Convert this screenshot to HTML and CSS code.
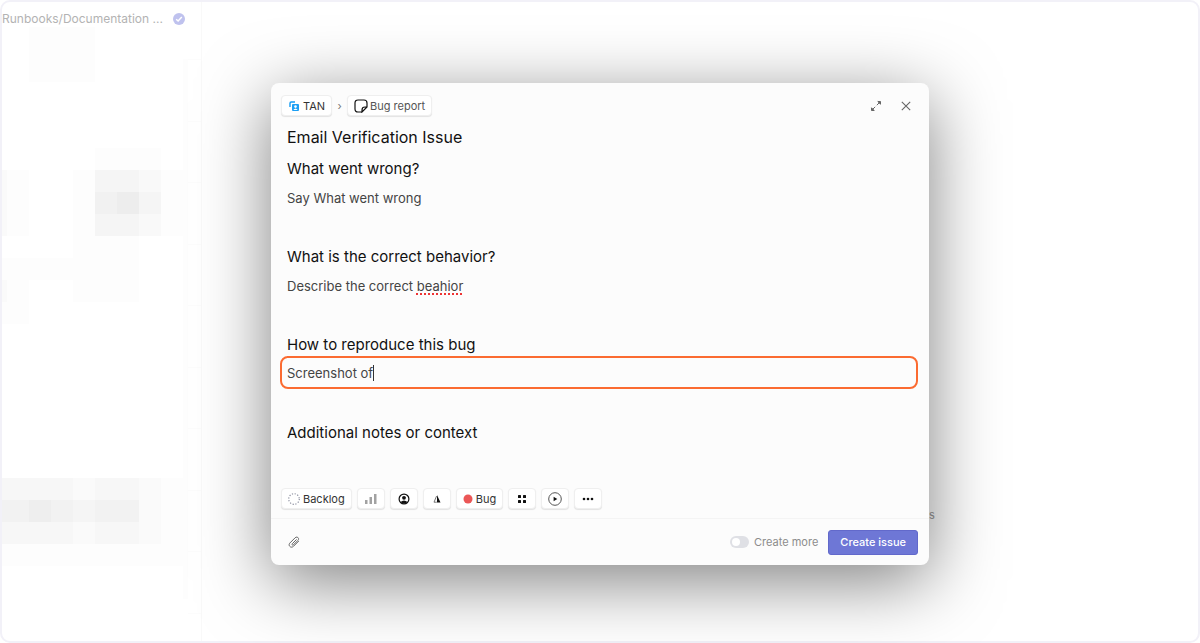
FILE: index.html
```html
<!DOCTYPE html>
<html lang="en">
<head>
<meta charset="utf-8">
<title>New issue</title>
<link rel="stylesheet" href="styles.css">
</head>
<body>
<div class="app">
  <aside class="sidebar">
    <div class="sidebar-item">
      <span>Runbooks/Documentation ...</span>
      <svg class="check" viewBox="0 0 12 12" aria-hidden="true"><circle cx="6" cy="6" r="6" fill="#bfc2ee"/><path d="M3.2 6.2 5.1 8l3.7-4" fill="none" stroke="#fff" stroke-width="1.5"/></svg>
    </div>
    <svg class="mosaic" viewBox="0 0 200 616" width="200" height="616" aria-hidden="true" shape-rendering="crispEdges">
      <g fill="#000">
        <path opacity=".006" d="M27 2h66v55H27zM49 2h22v55H49z"/>
        <path opacity=".006" d="M71 145h110v66H71zM0 145h27v66H0zM71 211h66v66H71zM0 233h93v22H0zM0 233h27v66H0z"/>
        <path opacity=".012" d="M0 145h5v66H0zM0 255h5v22H0z"/>
        <path opacity=".006" d="M93 123h66v22H93z"/>
        <path opacity=".014" d="M93 145h66v66H93z"/>
        <path opacity=".016" d="M93 145h44v66H93z"/>
        <path opacity=".014" d="M93 167h66v22H93z"/>
        <path opacity=".016" d="M115 167h22v22H115z"/>
        <path opacity=".006" d="M0 453h181v66H0z"/>
        <path opacity=".01" d="M0 453h159v66H0z"/>
        <path opacity=".012" d="M0 453h71v66H0zM93 453h44v66H93z"/>
        <path opacity=".018" d="M0 475h137v22H0z"/>
        <path opacity=".016" d="M27 475h22v22H27z"/>
        <path opacity=".006" d="M0 519h181v22H0zM181 34h5v540h-5z"/>
        <path opacity=".01" d="M186 34h13v1h-13zM186 96h13v1h-13zM186 157h13v1h-13zM186 219h13v1h-13zM186 280h13v1h-13zM186 342h13v1h-13zM186 403h13v1h-13zM186 465h13v1h-13zM186 526h13v1h-13zM186 588h13v1h-13z"/>
      </g>
    </svg>
  </aside>
  <main class="content"></main>
</div>

<div class="overlay">
  <span class="behind">s</span>
  <form class="modal" role="dialog" aria-label="New issue">
    <header class="modal-head">
      <button type="button" class="chip"><svg width="12" height="12" viewBox="0 0 12 12" aria-hidden="true"><path d="M2 7V3.2Q2 2 3.2 2H7" fill="none" stroke="#169cf3" stroke-width="1.4"/><rect x="4" y="4" width="7" height="7" rx="1" fill="#1c9ff4"/><circle cx="7.5" cy="6.600" r="1.300" fill="#fff"/><path d="M5.300 10Q7.500 6.800 9.700 10z" fill="#fff"/></svg>TAN</button>
      <span class="crumb">›</span>
      <button type="button" class="chip chip-template"><svg width="14" height="14" viewBox="0 0 14 14" fill="none" stroke="#111" stroke-width="1.2" aria-hidden="true"><path d="M8 13H4Q1 13 1 10V4Q1 1 4 1h6q3 0 3 3v4L8 13v-2q0-3 3-3h2"/></svg>Bug report</button>
      <span class="spacer"></span>
      <button type="button" class="icon-button" aria-label="Expand"><svg width="12" height="12" viewBox="0 0 12 12" fill="none" stroke="#666" aria-hidden="true"><path d="M6.800 5.200L9.500 2.500M5.200 6.800L2.500 9.500"/><path d="M7.800 1.500h2.700v2.700zM1.500 7.800v2.700h2.700z" fill="#666"/></svg></button>
      <button type="button" class="icon-button" aria-label="Close"><svg width="10" height="10" viewBox="0 0 10 10" fill="none" stroke="#666" stroke-width="1.1" aria-hidden="true"><path d="M.8.8l8.400 8.400M9.200.8L.8 9.200"/></svg></button>
    </header>

    <div class="editor">
      <input class="title" aria-label="Issue title" value="Email Verification Issue">
      <section class="block">
        <h2>What went wrong?</h2>
        <p contenteditable="true" spellcheck="false">Say What went wrong</p>
      </section>
      <section class="block">
        <h2>What is the correct behavior?</h2>
        <p contenteditable="true" spellcheck="false">Describe the correct <span class="typo">beahior</span></p>
      </section>
      <section class="block">
        <h2 id="repro">How to reproduce this bug</h2>
        <div class="active-line"><input class="line-input" aria-labelledby="repro" value="Screenshot of" spellcheck="false"><span class="caret"></span></div>
      </section>
      <section class="block block-last">
        <h2>Additional notes or context</h2>
      </section>
    </div>

    <div class="toolbar">
      <button type="button" class="chip"><svg width="12" height="12" viewBox="0 0 12 12" aria-hidden="true"><circle cx="6" cy="6" r="5.300" fill="none" stroke="#8d90a0" stroke-width="1.200" stroke-dasharray="1.200 1.575"/></svg>Backlog</button>
      <button type="button" class="chip chip-icon" aria-label="Priority"><svg width="14" height="12" viewBox="0 0 14 12" fill="#a2a2a2" aria-hidden="true"><rect x="1" y="7" width="2.500" height="4"/><rect x="5.500" y="4" width="2.500" height="7"/><rect x="10" y="1" width="2.500" height="10"/></svg></button>
      <button type="button" class="chip chip-icon" aria-label="Assignee"><svg width="12" height="12" viewBox="0 0 12 12" aria-hidden="true"><circle cx="6" cy="6" r="4.900" fill="none" stroke="#111" stroke-width="1.200"/><circle cx="6" cy="4.800" r="1.900" fill="#111"/><path d="M2.500 9Q6 5.800 9.500 9 6 12 2.500 9z" fill="#111"/></svg></button>
      <button type="button" class="chip chip-icon" aria-label="Estimate"><svg width="12" height="12" viewBox="0 0 12 12" aria-hidden="true"><path d="M6 2l3.500 7.500H6z" fill="#111"/><path d="M5.600 3L3 9.200h2.800" fill="none" stroke="#555" stroke-width=".8"/></svg></button>
      <button type="button" class="chip"><svg width="10" height="10" viewBox="0 0 10 10" aria-hidden="true"><circle cx="5" cy="5" r="4.500" fill="#eb5757"/></svg>Bug</button>
      <button type="button" class="chip chip-icon" aria-label="Project"><svg width="10" height="10" viewBox="0 0 10 10" fill="#111" aria-hidden="true"><rect x="1" y="1" width="3" height="3" rx=".5"/><rect x="6" y="1" width="3" height="3" rx=".5"/><rect x="1" y="6" width="3" height="3" rx=".5"/><rect x="6" y="6" width="3" height="3" rx=".5"/></svg></button>
      <button type="button" class="chip chip-icon" aria-label="Cycle"><svg width="14" height="14" viewBox="0 0 14 14" aria-hidden="true"><circle cx="7" cy="7" r="6.300" fill="none" stroke="#555"/><path d="M5.600 4.800L9.300 7 5.600 9.200z" fill="#111"/></svg></button>
      <button type="button" class="chip chip-icon" aria-label="More"><svg width="12" height="12" viewBox="0 0 12 12" fill="#111" aria-hidden="true"><circle cx="2" cy="6" r="1.300"/><circle cx="6" cy="6" r="1.300"/><circle cx="10" cy="6" r="1.300"/></svg></button>
    </div>

    <footer class="modal-foot">
      <button type="button" class="icon-button" aria-label="Attach file"><svg width="12" height="12" viewBox="0 0 12 12" fill="none" stroke="#666" stroke-linecap="round" aria-hidden="true"><path d="M8.300 3.700L4.300 7.700c-.9.900.3 2 1.200 1.100l4.400-4.400c2-2-.8-4.600-2.800-2.600L2 6.900c-2.500 2.500 1 5.900 3.500 3.400L10.500 5.300"/></svg></button>
      <span class="spacer"></span>
      <label class="more"><input type="checkbox" class="switch">Create more</label>
      <button type="submit" class="primary">Create issue</button>
    </footer>
  </form>
</div>
</body>
</html>
```
FILE: styles.css
```css
* { box-sizing: border-box; }
body {
  margin: 0;
  background: #fff;
  font-family: Inter, "Liberation Sans", sans-serif;
  color: #111;
}
button, input { font: inherit; color: inherit; }
svg { display: block; flex: none; }

.app {
  display: flex;
  min-height: 100vh;
  border: 2px solid #f2f1f8;
  border-radius: 10px;
  overflow: hidden;
}
.sidebar {
  width: 200px;
  border-right: 1px solid #f9f9f9;
}
.content { flex: 1; }
.sidebar-item {
  display: flex;
  align-items: center;
  gap: 10px;
  height: 24px;
  margin-bottom: -1px;
  padding-top: 9px;
  font-size: 12px;
  line-height: 16px;
  color: #b3b3b3;
  white-space: nowrap;
}
.check { width: 12px; height: 12px; }

.overlay {
  position: absolute;
  inset: 0;
  display: flex;
  align-items: flex-start;
  justify-content: center;
  padding: 83px 16px 0;
  overflow: hidden;
}
.behind {
  position: absolute;
  left: 929px;
  top: 508px;
  font-size: 11px;
  line-height: 14px;
  color: #999;
}
.modal {
  position: relative;
  width: 100%;
  max-width: 658px;
  background: #fcfcfc;
  border-radius: 8px;
  box-shadow: 0 16px 70px rgba(0, 0, 0, .5);
}
.modal-head {
  display: flex;
  align-items: center;
  padding: 12px 16px 0 10px;
}
.spacer { flex: 1; }
.chip {
  display: flex;
  align-items: center;
  justify-content: center;
  gap: 3px;
  height: 21px;
  padding: 0 6px;
  border: 1px solid #efefef;
  border-radius: 4px;
  background: #fff;
  box-shadow: 0 1px 1px rgba(0, 0, 0, .1);
  font-size: 11px;
  line-height: 14px;
  color: #333;
}
.chip-template { gap: 2px; color: #555; }
.chip-icon { width: 28px; padding: 0; }
.crumb {
  width: 15px;
  text-align: center;
  font-size: 11px;
  line-height: 14px;
  color: #777;
}
.icon-button {
  display: flex;
  align-items: center;
  justify-content: center;
  width: 14px;
  height: 14px;
  padding: 0;
  border: 0;
  background: none;
}
.icon-button + .icon-button { margin-left: 16px; }

.editor { padding: 9px 10px 0; }
.title {
  display: block;
  width: 100%;
  height: 24px;
  margin-bottom: 8px;
  padding: 0 6px;
  border: 0;
  background: none;
  font-size: 16px;
  line-height: 24px;
}
.block { min-height: 88px; }
.block-last { min-height: 67px; }
.block h2 {
  margin: 0;
  padding: 0 6px;
  font-size: 15px;
  font-weight: 400;
  line-height: 23px;
}
.block p {
  margin: 6px 0 0;
  padding: 0 6px;
  font-size: 13px;
  line-height: 24px;
  color: #444;
}
.typo {
  text-decoration: underline dotted #e33 2px;
  text-underline-offset: 2px;
}
.active-line {
  display: flex;
  align-items: center;
  height: 33px;
  margin-right: 1px;
  margin-left: -1px;
  padding: 0 5px;
  border: 2px solid #fb6b31;
  border-radius: 8px;
}
.line-input {
  field-sizing: content;
  padding: 0;
  border: 0;
  outline: 0;
  background: none;
  font-size: 13px;
  line-height: 24px;
  color: #444;
}
.caret { width: 1px; height: 16px; background: #333; }

.toolbar {
  display: flex;
  flex-wrap: wrap;
  gap: 5px;
  padding: 0 10px 9px;
}
.modal-foot {
  display: flex;
  align-items: center;
  height: 47px;
  padding: 0 11px 0 16px;
  border-top: 1px solid #f4f4f4;
}
.more {
  display: flex;
  align-items: center;
  gap: 5px;
  margin-right: 10px;
  font-size: 11px;
  line-height: 14px;
  color: #8c8c8c;
}
.switch {
  appearance: none;
  display: flex;
  width: 19px;
  height: 12px;
  margin: 0;
  padding: 2px;
  border-radius: 6px;
  background: #dfe0e5;
}
.switch::before {
  content: "";
  width: 8px;
  height: 8px;
  border-radius: 50%;
  background: #fff;
}
.switch:checked { justify-content: flex-end; }
.primary {
  height: 25px;
  padding: 0 11px;
  border: 1px solid #6269cb;
  border-radius: 3px;
  background: #6e77d6;
  font-size: 11px;
  font-weight: 500;
  line-height: 14px;
  color: #fff;
}
```
